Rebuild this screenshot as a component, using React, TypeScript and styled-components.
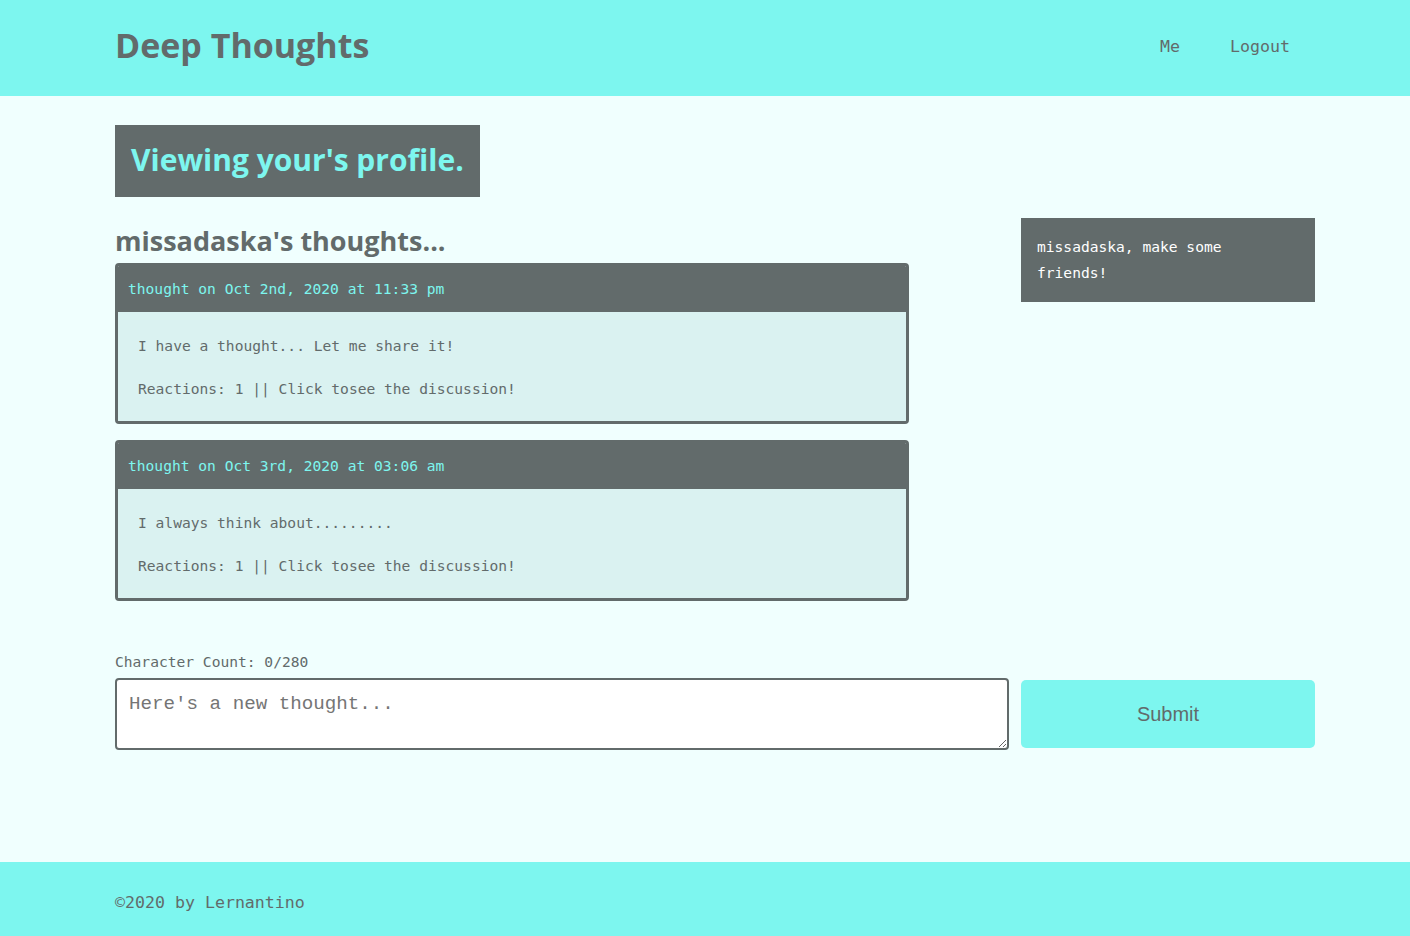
import { FunctionComponent } from 'react'
import styled, { createGlobalStyle } from 'styled-components'

const primary = '#7df6ef'
const dark = '#626b6b'
const light = '#f0fffe'
const tertiary = '#daf2f1'
const mono = "'DejaVu Sans Mono', 'Liberation Mono', monospace"
const heading = "'Open Sans', Lato, sans-serif"

const GlobalStyle = createGlobalStyle`
  * { box-sizing: border-box; }
  html, body { margin: 0; padding: 0; }
  body {
    background: ${light};
    color: ${dark};
    font-family: ${mono};
  }
`

interface IThought {
  id: string
  createdAt: string
  text: string
  reactions: number
}

const thoughts: IThought[] = [
  { id: '1', createdAt: 'Oct 2nd, 2020 at 11:33 pm', text: 'I have a thought... Let me share it!', reactions: 1 },
  { id: '2', createdAt: 'Oct 3rd, 2020 at 03:06 am', text: 'I always think about.........', reactions: 1 }
]

const App: FunctionComponent = () => {
  return (
    <Page>
      <GlobalStyle />
      <Header>
        <Container>
          <Logo>Deep Thoughts</Logo>
          <Nav>
            <NavLink href='#'>Me</NavLink>
            <NavLink href='#'>Logout</NavLink>
          </Nav>
        </Container>
      </Header>
      <Main>
        <Container>
          <Content>
            <Banner>Viewing your's profile.</Banner>
            <Row>
              <LeftCol>
                <ListTitle>missadaska's thoughts...</ListTitle>
                {thoughts.map(thought => (
                  <Card key={thought.id}>
                    <CardHeader>thought on {thought.createdAt}</CardHeader>
                    <CardBody>
                      <p>{thought.text}</p>
                      <p>Reactions: {thought.reactions} || Click tosee the discussion!</p>
                    </CardBody>
                  </Card>
                ))}
              </LeftCol>
              <RightCol>
                <FriendBox>missadaska, make some friends!</FriendBox>
              </RightCol>
            </Row>
            <FormArea>
              <CountLabel>Character Count: 0/280</CountLabel>
              <Form>
                <TextArea placeholder="Here's a new thought..." />
                <SubmitButton type='submit'>Submit</SubmitButton>
              </Form>
            </FormArea>
          </Content>
        </Container>
      </Main>
      <Footer>
        <Container>©2020 by Lernantino</Container>
      </Footer>
    </Page>
  )
}

const Page = styled.div`
  min-height: 100vh;
  display: flex;
  flex-direction: column;
`

const Header = styled.header`
  background: ${primary};
  height: 96px;
  display: flex;
  align-items: center;
`

const Container = styled.div`
  width: 1220px;
  padding-left: 20px;
  margin: 0 auto;
  display: flex;
  align-items: center;
  justify-content: space-between;
`

const Logo = styled.h1`
  margin: 0 0 6px;
  font-family: ${heading};
  font-size: 34px;
  font-weight: 700;
  color: ${dark};
`

const Nav = styled.nav`
  display: flex;
  margin-bottom: 4px;
`

const NavLink = styled.a`
  margin: 0 25px;
  font-size: 16.6px;
  color: ${dark};
  text-decoration: none;
`

const Main = styled.main`
  flex: 1;
`

const Content = styled.div`
  width: 100%;
  padding-top: 29px;
`

const Banner = styled.h2`
  display: inline-block;
  margin: 0;
  padding: 0 16px;
  height: 72px;
  line-height: 70px;
  background: ${dark};
  color: ${primary};
  font-family: ${heading};
  font-size: 30px;
  font-weight: 700;
`

const Row = styled.div`
  display: flex;
  justify-content: space-between;
  margin-top: 21px;
`

const LeftCol = styled.div`
  width: 794px;
`

const RightCol = styled.div`
  width: 294px;
`

const ListTitle = styled.h3`
  margin: 0;
  font-family: ${heading};
  font-size: 27px;
  line-height: 45px;
  font-weight: 700;
  color: ${dark};
`

const Card = styled.div`
  border: 3px solid ${dark};
  border-radius: 4px;
  margin-bottom: 16px;
  overflow: hidden;
`

const CardHeader = styled.div`
  background: ${dark};
  color: ${primary};
  font-size: 14.6px;
  height: 46px;
  line-height: 46px;
  padding: 0 10px;
`

const CardBody = styled.div`
  background: ${tertiary};
  padding: 24px 20px 23px;
  font-size: 14.6px;
  color: ${dark};

  p {
    margin: 0 0 24px;
    line-height: 19px;
  }

  p:last-child {
    margin-bottom: 0;
  }
`

const FriendBox = styled.div`
  background: ${dark};
  color: #fff;
  font-size: 14.6px;
  line-height: 26px;
  padding: 16px 16px 16px;
`

const FormArea = styled.div`
  margin-top: 36px;
`

const CountLabel = styled.p`
  margin: 0 0 8px;
  font-size: 14.6px;
  color: ${dark};
`

const Form = styled.form`
  display: flex;
  align-items: center;
  justify-content: space-between;
`

const TextArea = styled.textarea`
  width: 894px;
  height: 72px;
  border: 2px solid ${dark};
  border-radius: 4px;
  padding: 13px 12px;
  background: #fff;
  font-family: 'Liberation Mono', 'Courier New', monospace;
  font-size: 19.2px;
  color: ${dark};

  &::placeholder {
    color: #757575;
  }
`

const SubmitButton = styled.button`
  width: 294px;
  height: 68px;
  border: none;
  border-radius: 5px;
  background: ${primary};
  color: ${dark};
  font-family: 'Liberation Sans', Arial, sans-serif;
  font-size: 20px;
  cursor: pointer;
`

const Footer = styled.footer`
  background: ${primary};
  height: 74px;
  display: flex;
  align-items: center;
  padding-top: 6px;
  font-size: 16.6px;
  color: ${dark};
`

export default App
